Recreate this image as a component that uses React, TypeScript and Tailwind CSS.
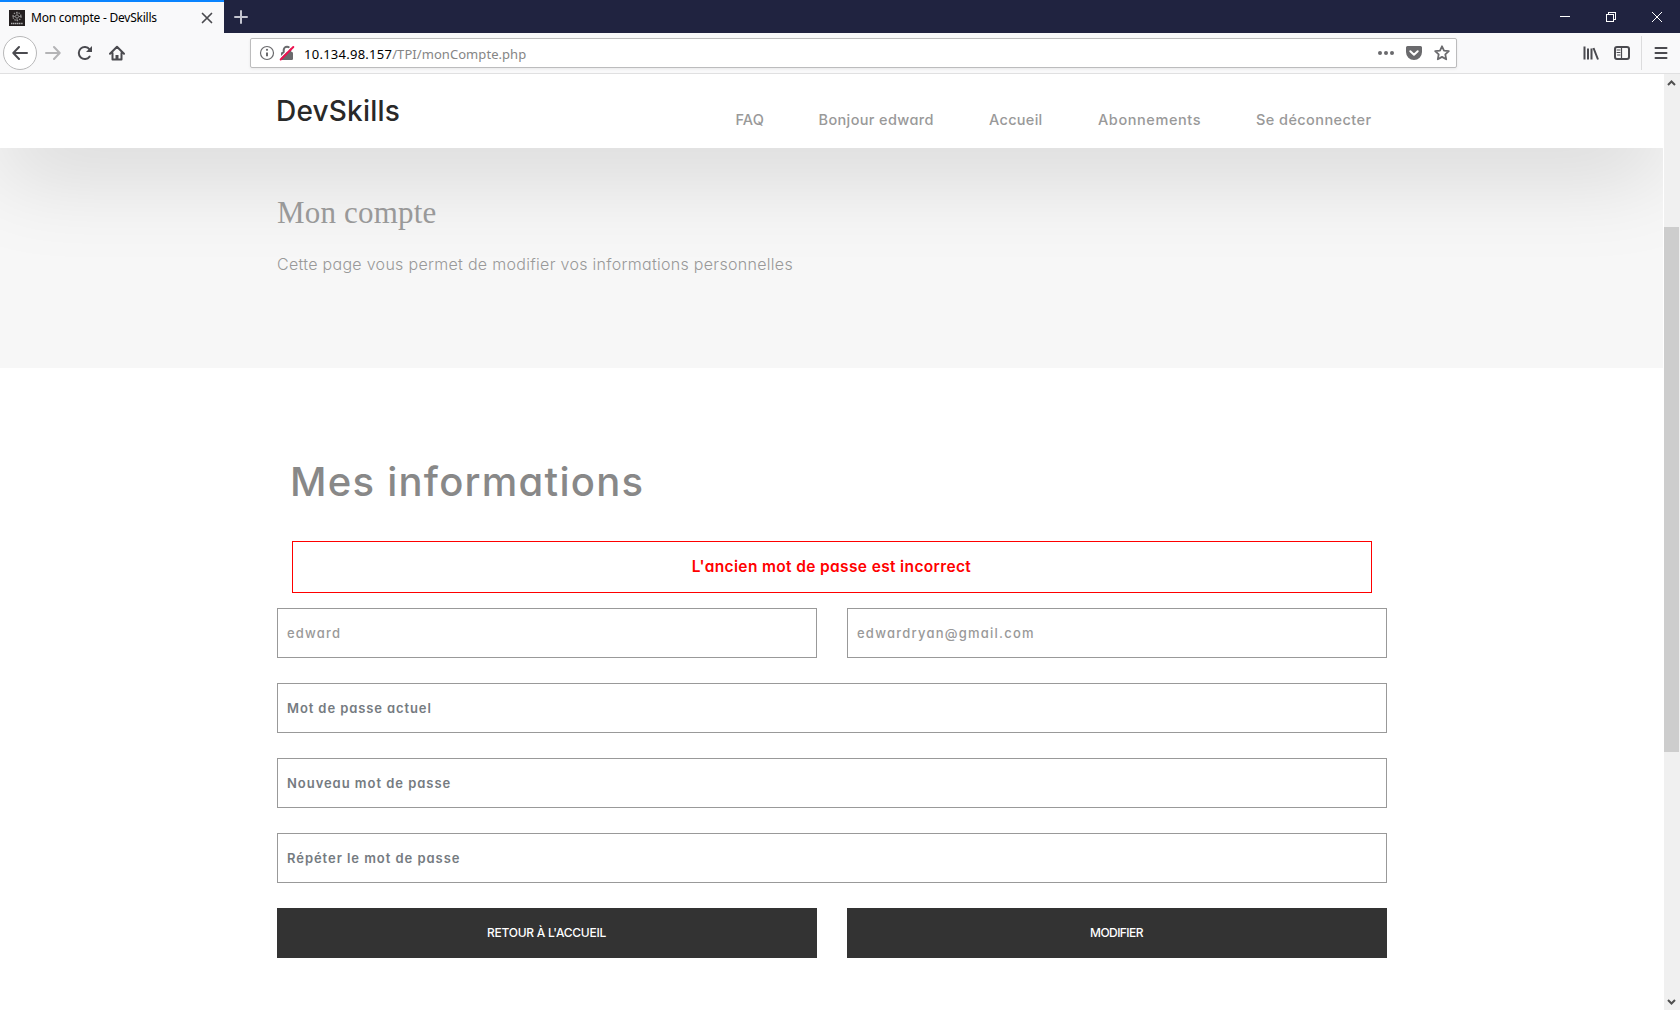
import type { ReactNode } from "react";

function Icon({ size = 16, className = "", children }: { size?: number; className?: string; children: ReactNode }) {
  return (
    <svg width={size} height={size} viewBox={`0 0 ${size} ${size}`} fill="none" stroke="currentColor" strokeWidth={2} strokeLinecap="round" strokeLinejoin="round" className={`shrink-0 ${className}`}>
      {children}
    </svg>
  );
}

function TitleBar() {
  return (
    <div className="flex h-[33px] bg-[#202340]">
      <div className="flex h-[33px] w-[224px] items-center border-t-2 border-[#0a84ff] bg-[#f9f9fa] pr-[11px] pl-[9px]">
        <svg width="16" height="16" viewBox="0 0 16 16" className="shrink-0" stroke="#9a9a9a" fill="none">
          <rect width="16" height="16" fill="#231f20" stroke="none" />
          <circle cx="8" cy="6.5" r="1.6" strokeWidth="0.9" />
          <circle cx="8" cy="6.5" r="4" strokeWidth="1.3" strokeDasharray="1.3 1.2" />
          <path d="M8 2v2.5M8 8.5V11M3.5 6.5H6M10 6.5h2.500" strokeWidth="0.8" />
          <path d="M2 13.500h12" strokeWidth="1.6" stroke="#b0b0b0" strokeDasharray="1.400 0.5" />
        </svg>
        <span className="ml-[6px] font-['Noto_Sans',sans-serif] text-[12px] leading-[18px] tracking-[-0.23px] whitespace-nowrap text-black">Mon compte - DevSkills</span>
        <Icon size={12} className="ml-auto text-[#4a4a4f]">
          <path d="M1.500 1.500l9 9M10.500 1.500l-9 9" strokeWidth={1.700} />
        </Icon>
      </div>
      <div className="flex w-[34px] items-center justify-center text-[#c4c5d0]">
        <Icon size={14}>
          <path d="M7 1v12M1 7h12" />
        </Icon>
      </div>
      <div className="ml-auto flex items-center gap-[36px] pr-[18px] text-white">
        <svg width="10" height="10" shapeRendering="crispEdges"><path d="M0 4.500h10" stroke="currentColor" /></svg>
        <svg width="10" height="10" fill="none" stroke="currentColor" shapeRendering="crispEdges">
          <path d="M.5 2.500h7v7h-7zM2.500 2.500v-2h7v7h-2" />
        </svg>
        <svg width="10" height="10" fill="none" stroke="currentColor"><path d="M0 0l10 10M10 0L0 10" /></svg>
      </div>
    </div>
  );
}

function ToolBar() {
  return (
    <div className="flex h-[41px] items-center border-b border-[#e0e0e1] bg-[#f9f9fa] text-[#4a4a4f]">
      <div className="ml-[3px] flex size-[34px] items-center justify-center rounded-full border border-[#b8b8b9] bg-white">
        <Icon><path d="M15 8H1.500M7 2L1.300 8 7 14" /></Icon>
      </div>
      <Icon className="ml-[8px] text-[#b4b4b6]"><path d="M1 8h13.500M9 2l5.700 6L9 14" /></Icon>
      <Icon className="ml-[16px]">
        <path d="M12.600 11.600A6 6 0 1 1 12.500 4.300" />
        <path d="M15 1v6H9z" fill="currentColor" stroke="none" />
      </Icon>
      <Icon className="ml-[16px]">
        <path d="M1 8.700L8 1.700l7 7M3.500 8v6.500h9V8" />
        <path d="M6.500 14v-4h3v4z" fill="currentColor" stroke="none" />
      </Icon>
      <div className="ml-[125px] flex h-[30px] w-[1207px] items-center rounded-[2px] border border-[#bcbcbd] bg-white px-[8px] text-[#6a6a6d] shadow-[0_1px_3px_rgba(0,0,0,0.07)]">
        <Icon>
          <circle cx="8" cy="8" r="6.500" strokeWidth={1.200} />
          <path d="M8 7.500v3.800" strokeLinecap="butt" />
          <circle cx="8" cy="4.800" r="1.100" fill="currentColor" stroke="none" />
        </Icon>
        <Icon className="ml-[4px]">
          <rect x="2" y="7" width="12" height="8" rx="1.200" fill="currentColor" stroke="none" />
          <path d="M4.700 7.500V5a3.300 3.300 0 0 1 6.600 0v2.500" />
          <path d="M0.500 13.500L13 1" stroke="#fff" strokeWidth={1.500} strokeLinecap="butt" />
          <path d="M1.700 14.500L14.300 2" stroke="#ed1250" strokeWidth={2} />
        </Icon>
        <div className="mt-[2px] ml-[9px] font-['Noto_Sans',sans-serif] text-[13px] leading-[20px] whitespace-nowrap">
          <span className="tracking-[0.260px] text-black">10.134.98.157</span>
          <span className="tracking-[0.060px] text-[#858585]">/TPI/monCompte.php</span>
        </div>
        <div className="ml-auto flex items-center gap-[12px]">
          <Icon>
            <g fill="currentColor" stroke="none"><circle cx="2" cy="8" r="2" /><circle cx="8" cy="8" r="2" /><circle cx="14" cy="8" r="2" /></g>
          </Icon>
          <Icon>
            <path d="M1.500 1h13A1.500 1.500 0 0 1 16 2.500V7A8 8 0 0 1 0 7V2.500A1.500 1.500 0 0 1 1.500 1z" fill="currentColor" stroke="none" />
            <path d="M4.300 6.200L8 9.700l3.700-3.500" stroke="#fff" />
          </Icon>
          <Icon className="-mr-[2px]">
            <path d="M8 1.300l2 4.300 4.800.6-3.500 3.200.9 4.900L8 11.900l-4.200 2.400.9-4.900L1.200 6.200 6 5.600z" strokeWidth={1.800} />
          </Icon>
        </div>
      </div>
      <div className="ml-auto flex h-full items-center pr-[11px]">
        <Icon>
          <path d="M1.500 1.500v13M5 3.500v11M8.500 3.500v11M10.500 3l4.500 11.500" strokeLinecap="butt" />
        </Icon>
        <Icon className="ml-[15px]">
          <rect x="1" y="2" width="14" height="12" rx="2" />
          <path d="M7.500 2v12" strokeWidth={1.200} />
          <path d="M3 5h3M3 7.500h3M3.500 10H6" strokeWidth={1} />
        </Icon>
        <div className="ml-[11px] h-[34px] w-px bg-[#dcdcdd]" />
        <Icon className="ml-[11px]">
          <path d="M2.500 3h11M2.500 8h11M2.500 13h11" />
        </Icon>
      </div>
    </div>
  );
}

const navItems = [
  { label: "FAQ", style: "w-[28px] tracking-[0.100px]" },
  { label: "Bonjour edward", style: "w-[115.500px] tracking-[0.370px]" },
  { label: "Accueil", style: "w-[54px] tracking-[0.300px]" },
  { label: "Abonnements", style: "w-[103px] tracking-[0.580px]" },
  { label: "Se déconnecter", style: "w-[115px] tracking-[0.420px]" },
];

function SiteHeader() {
  return (
    <header className="relative flex h-[74px] justify-between bg-white pr-[292px] pl-[277px] shadow-[0_25px_90px_rgba(0,0,0,0.145)]">
      <div className="mt-[17px] -ml-[1px] text-[28px] leading-[40px] font-medium tracking-[0.200px] text-[#292929]">DevSkills</div>
      <nav className="mt-[36px] flex gap-[55px] text-[14.500px] leading-[20px] font-medium whitespace-nowrap text-[#999]">
        {navItems.map((n) => (
          <a key={n.label} className={n.style}>{n.label}</a>
        ))}
      </nav>
    </header>
  );
}

function Hero() {
  return (
    <section className="h-[220px] bg-[#f7f7f7] pl-[277px] text-[#999]">
      <div className="relative">
        <h1 className="pt-[45px] font-['Liberation_Serif',serif] text-[31px] leading-[40px] tracking-[0.180px]">Mon compte</h1>
        <p className="mt-[18px] text-[16px] leading-[26px] font-light tracking-[0.300px]">Cette page vous permet de modifier vos informations personnelles</p>
      </div>
    </section>
  );
}

function Field({ text, style }: { text: string; style: string }) {
  return <div className={`flex h-[50px] items-center border border-[#999] pt-px pl-[9px] text-[13px] ${style}`}>{text}</div>;
}

function AccountForm() {
  return (
    <section className="flex-1 bg-white pr-[276px] pl-[277px]">
      <h2 className="mt-[87px] ml-[13px] text-[40px] leading-[54px] font-medium tracking-[1.250px] text-[#888]">Mes informations</h2>
      <div className="mx-[15px] mt-[32px] flex h-[52px] items-center justify-center border border-[#f00] pr-px text-[15.500px] font-semibold tracking-[0.360px] text-[#f00]">L'ancien mot de passe est incorrect</div>
      <div className="mt-[15px] grid grid-cols-2 gap-x-[30px] gap-y-[25px]">
        <Field text="edward" style="font-medium tracking-[1.200px] text-[#999]" />
        <Field text="edwardryan@gmail.com" style="font-medium tracking-[1.230px] text-[#999]" />
        <Field text="Mot de passe actuel" style="col-span-2 font-semibold tracking-[0.900px] text-[#757b81]" />
        <Field text="Nouveau mot de passe" style="col-span-2 font-semibold tracking-[0.960px] text-[#757b81]" />
        <Field text="Répéter le mot de passe" style="col-span-2 font-semibold tracking-[0.950px] text-[#757b81]" />
        <button className="h-[50px] bg-[#333] pr-px text-[12px] font-medium tracking-[-0.260px] text-white">RETOUR À L'ACCUEIL</button>
        <button className="h-[50px] bg-[#333] pr-px text-[12px] font-medium tracking-[-0.560px] text-white">MODIFIER</button>
      </div>
    </section>
  );
}

function ScrollBar() {
  return (
    <div className="flex w-[16px] flex-col items-center justify-between bg-[#f0f0f0] pt-[5px] pb-[4px] text-[#505050]">
      <svg width="9" height="8" viewBox="0 0 9 8" className="-ml-px" fill="none" stroke="currentColor" strokeWidth="2"><path d="M1 6l3.500-3.500L8 6" /></svg>
      <div className="mt-[140px] mb-auto h-[525px] w-[15px] shrink-0 self-start bg-[#cdcdcd]" />
      <svg width="9" height="8" viewBox="0 0 9 8" className="-ml-px" fill="none" stroke="currentColor" strokeWidth="2"><path d="M1 2l3.500 3.500L8 2" /></svg>
    </div>
  );
}

export default function App() {
  return (
    <div className="flex h-[1010px] w-[1680px] flex-col overflow-hidden bg-white">
      <TitleBar />
      <ToolBar />
      <div className="flex min-h-0 flex-1">
        <main className="mr-px flex w-[1663px] flex-col overflow-hidden font-['Inter',sans-serif] [font-feature-settings:'cv11','ss03']">
          <SiteHeader />
          <Hero />
          <AccountForm />
        </main>
        <ScrollBar />
      </div>
    </div>
  );
}
